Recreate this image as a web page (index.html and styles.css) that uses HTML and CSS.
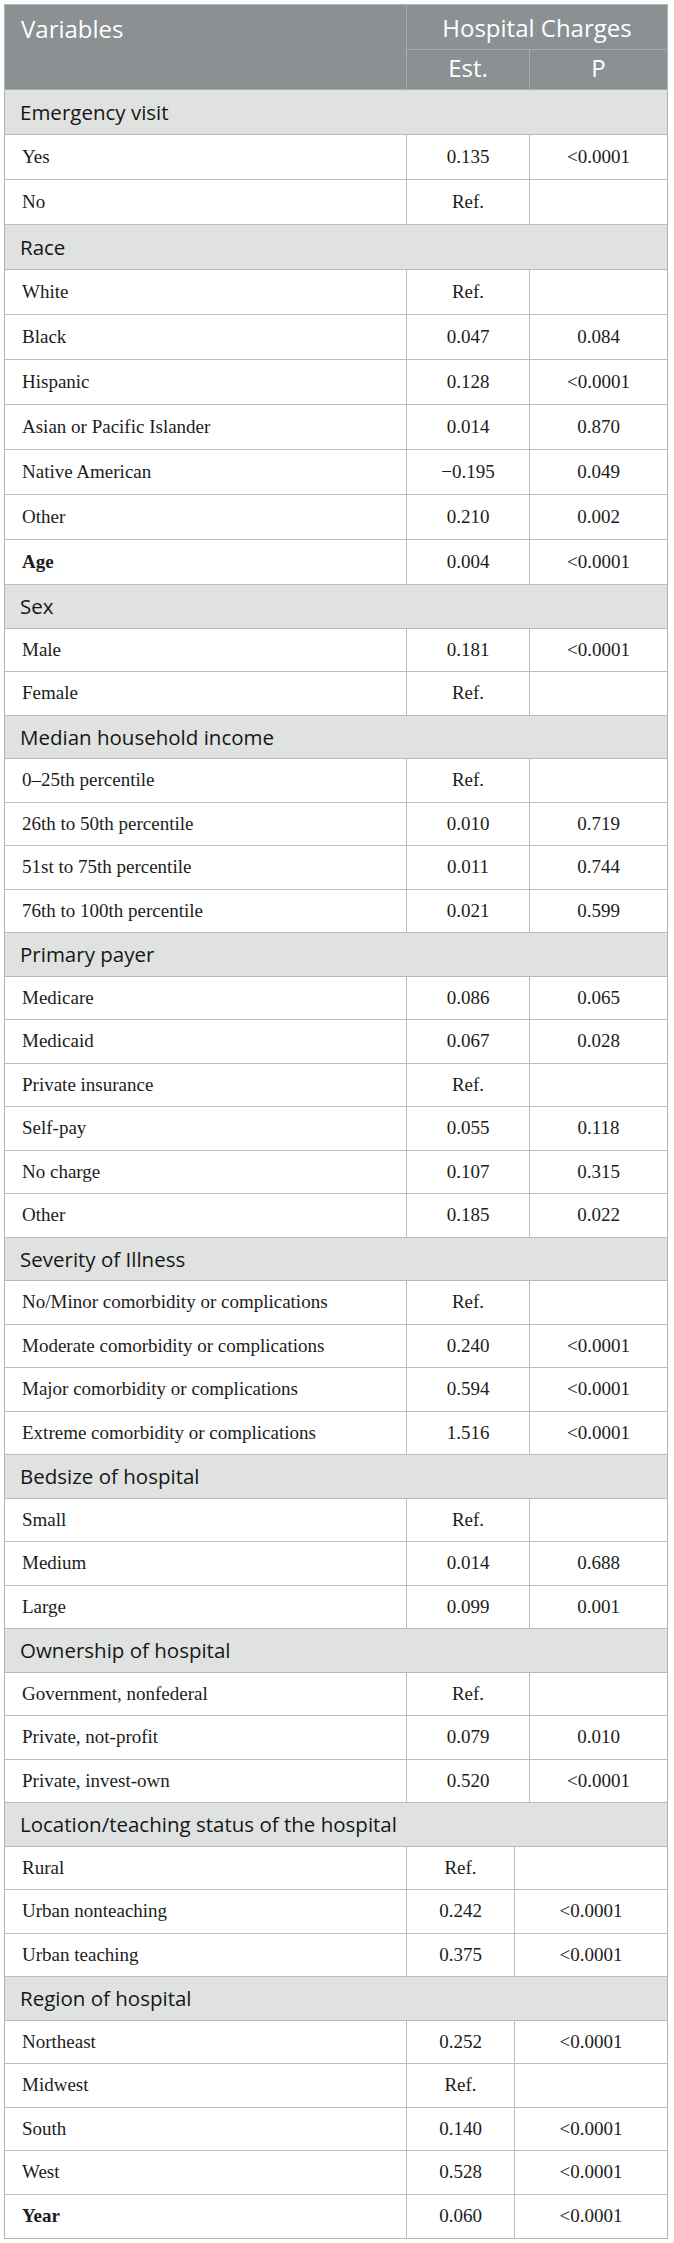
FILE: index.html
```html
<!DOCTYPE html>
<html lang="en">
<head>
<meta charset="utf-8">
<title>Hospital Charges</title>
<link rel="stylesheet" href="styles.css">
</head>
<body>
<div class="tbl">
  <div class="head">
    <div class="h-var">Variables</div>
    <div class="h-group">Hospital Charges</div>
    <div class="h-est">Est.</div>
    <div class="h-p">P</div>
  </div>

  <div class="sec roomy">
    <div class="sec-title">Emergency visit</div>
    <div class="row"><div class="c1">Yes</div><div class="c2">0.135</div><div class="c3">&lt;0.0001</div></div>
    <div class="row"><div class="c1">No</div><div class="c2">Ref.</div><div class="c3"></div></div>
  </div>

  <div class="sec roomy">
    <div class="sec-title">Race</div>
    <div class="row"><div class="c1">White</div><div class="c2">Ref.</div><div class="c3"></div></div>
    <div class="row"><div class="c1">Black</div><div class="c2">0.047</div><div class="c3">0.084</div></div>
    <div class="row"><div class="c1">Hispanic</div><div class="c2">0.128</div><div class="c3">&lt;0.0001</div></div>
    <div class="row"><div class="c1">Asian or Pacific Islander</div><div class="c2">0.014</div><div class="c3">0.870</div></div>
    <div class="row"><div class="c1">Native American</div><div class="c2">&minus;0.195</div><div class="c3">0.049</div></div>
    <div class="row"><div class="c1">Other</div><div class="c2">0.210</div><div class="c3">0.002</div></div>
    <div class="row"><div class="c1 b">Age</div><div class="c2">0.004</div><div class="c3">&lt;0.0001</div></div>
  </div>

  <div class="sec">
    <div class="sec-title">Sex</div>
    <div class="row"><div class="c1">Male</div><div class="c2">0.181</div><div class="c3">&lt;0.0001</div></div>
    <div class="row"><div class="c1">Female</div><div class="c2">Ref.</div><div class="c3"></div></div>
  </div>

  <div class="sec">
    <div class="sec-title">Median household income</div>
    <div class="row"><div class="c1">0–25th percentile</div><div class="c2">Ref.</div><div class="c3"></div></div>
    <div class="row"><div class="c1">26th to 50th percentile</div><div class="c2">0.010</div><div class="c3">0.719</div></div>
    <div class="row"><div class="c1">51st to 75th percentile</div><div class="c2">0.011</div><div class="c3">0.744</div></div>
    <div class="row"><div class="c1">76th to 100th percentile</div><div class="c2">0.021</div><div class="c3">0.599</div></div>
  </div>

  <div class="sec">
    <div class="sec-title">Primary payer</div>
    <div class="row"><div class="c1">Medicare</div><div class="c2">0.086</div><div class="c3">0.065</div></div>
    <div class="row"><div class="c1">Medicaid</div><div class="c2">0.067</div><div class="c3">0.028</div></div>
    <div class="row"><div class="c1">Private insurance</div><div class="c2">Ref.</div><div class="c3"></div></div>
    <div class="row"><div class="c1">Self-pay</div><div class="c2">0.055</div><div class="c3">0.118</div></div>
    <div class="row"><div class="c1">No charge</div><div class="c2">0.107</div><div class="c3">0.315</div></div>
    <div class="row"><div class="c1">Other</div><div class="c2">0.185</div><div class="c3">0.022</div></div>
  </div>

  <div class="sec">
    <div class="sec-title">Severity of Illness</div>
    <div class="row"><div class="c1">No/Minor comorbidity or complications</div><div class="c2">Ref.</div><div class="c3"></div></div>
    <div class="row"><div class="c1">Moderate comorbidity or complications</div><div class="c2">0.240</div><div class="c3">&lt;0.0001</div></div>
    <div class="row"><div class="c1">Major comorbidity or complications</div><div class="c2">0.594</div><div class="c3">&lt;0.0001</div></div>
    <div class="row"><div class="c1">Extreme comorbidity or complications</div><div class="c2">1.516</div><div class="c3">&lt;0.0001</div></div>
  </div>

  <div class="sec">
    <div class="sec-title">Bedsize of hospital</div>
    <div class="row"><div class="c1">Small</div><div class="c2">Ref.</div><div class="c3"></div></div>
    <div class="row"><div class="c1">Medium</div><div class="c2">0.014</div><div class="c3">0.688</div></div>
    <div class="row"><div class="c1">Large</div><div class="c2">0.099</div><div class="c3">0.001</div></div>
  </div>

  <div class="sec">
    <div class="sec-title">Ownership of hospital</div>
    <div class="row"><div class="c1">Government, nonfederal</div><div class="c2">Ref.</div><div class="c3"></div></div>
    <div class="row"><div class="c1">Private, not-profit</div><div class="c2">0.079</div><div class="c3">0.010</div></div>
    <div class="row"><div class="c1">Private, invest-own</div><div class="c2">0.520</div><div class="c3">&lt;0.0001</div></div>
  </div>

  <div class="sec narrow">
    <div class="sec-title">Location/teaching status of the hospital</div>
    <div class="row"><div class="c1">Rural</div><div class="c2">Ref.</div><div class="c3"></div></div>
    <div class="row"><div class="c1">Urban nonteaching</div><div class="c2">0.242</div><div class="c3">&lt;0.0001</div></div>
    <div class="row"><div class="c1">Urban teaching</div><div class="c2">0.375</div><div class="c3">&lt;0.0001</div></div>
  </div>

  <div class="sec narrow">
    <div class="sec-title">Region of hospital</div>
    <div class="row"><div class="c1">Northeast</div><div class="c2">0.252</div><div class="c3">&lt;0.0001</div></div>
    <div class="row"><div class="c1">Midwest</div><div class="c2">Ref.</div><div class="c3"></div></div>
    <div class="row"><div class="c1">South</div><div class="c2">0.140</div><div class="c3">&lt;0.0001</div></div>
    <div class="row"><div class="c1">West</div><div class="c2">0.528</div><div class="c3">&lt;0.0001</div></div>
    <div class="row last"><div class="c1 b">Year</div><div class="c2">0.060</div><div class="c3">&lt;0.0001</div></div>
  </div>
</div>
</body>
</html>
```

FILE: styles.css
```css
* { box-sizing: border-box; }

html, body {
  margin: 0;
  padding: 0;
  background: #ffffff;
}

body {
  width: 674px;
  height: 2243px;
  padding: 4px 6px 0 4px;
}

.tbl {
  border: 1px solid #b3b5b5;
  display: flex;
  flex-direction: column;
}

/* header */
.head {
  display: grid;
  grid-template-columns: 401px 123px 1fr;
  grid-template-rows: 45px 39px;
  background: #8b9092;
  color: #ffffff;
  font-family: "Open Sans", "Noto Sans", sans-serif;
  font-size: 24px;
  border-bottom: 1px solid #a7abac;
}

.h-var {
  grid-row: 1 / 3;
  grid-column: 1;
  padding: 4px 0 0 16px;
  line-height: 40px;
}

.h-group {
  grid-row: 1;
  grid-column: 2 / 4;
  border-left: 1px solid #a7abac;
  border-bottom: 1px solid #a7abac;
  text-align: center;
  line-height: 44px;
  padding-top: 1px;
}

.h-est, .h-p {
  grid-row: 2;
  border-left: 1px solid #a7abac;
  text-align: center;
  line-height: 36px;
}
.h-est { grid-column: 2; }
.h-p { grid-column: 3; }

/* sections */
.sec {
  display: flex;
  flex-direction: column;
}

.sec-title {
  height: 43.5px;
  background: #e0e2e1;
  border-bottom: 1px solid #b8baba;
  font-family: "Open Sans", "Noto Sans", sans-serif;
  font-size: 20.5px;
  color: #161616;
  display: flex;
  align-items: center;
  padding-left: 15px;
}

.row {
  height: 43.5px;
  display: grid;
  grid-template-columns: 401px 123px 1fr;
  border-bottom: 1px solid #bdbdbd;
  font-family: "Liberation Serif", "Times New Roman", serif;
  font-size: 19px;
  color: #1c1c1c;
}

.row.last { border-bottom: none; }

.roomy .sec-title,
.roomy .row { height: 45px; }

.narrow .row { grid-template-columns: 401px 108px 1fr; }

.c1, .c2, .c3 {
  display: flex;
  align-items: center;
}

.c1 { padding-left: 17px; }

.c2, .c3 {
  justify-content: center;
  border-left: 1px solid #bdbdbd;
}

.b { font-weight: bold; }
```
